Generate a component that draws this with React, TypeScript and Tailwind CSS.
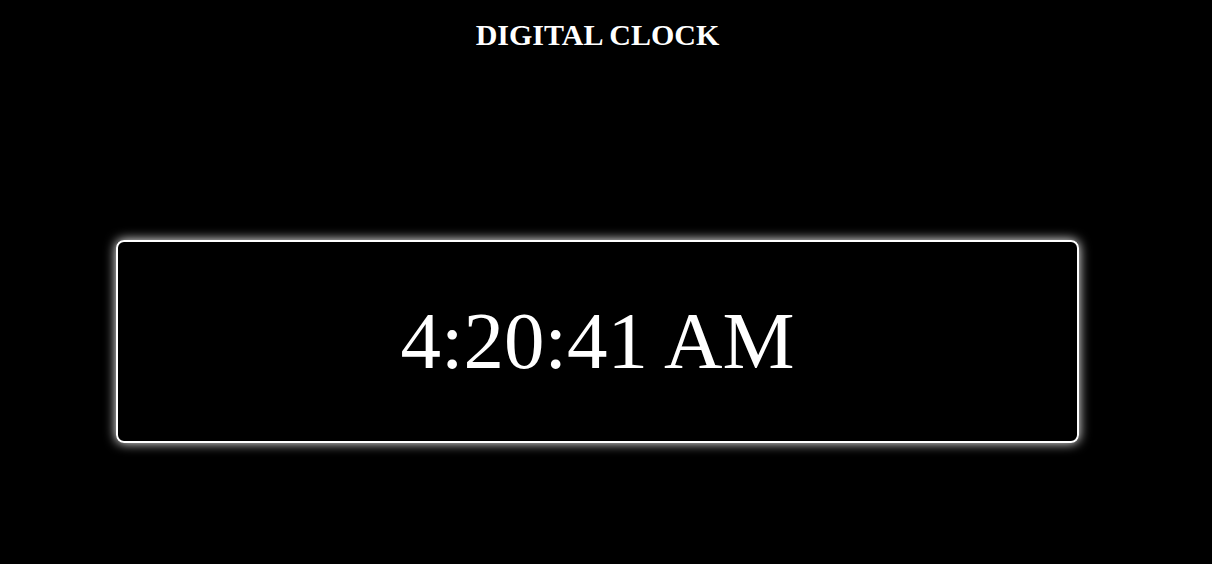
export default function App() {
  const time = '4:20:41 AM'

  return (
    <div className="min-h-screen w-full bg-black" style={{ fontFamily: '"Liberation Serif", "Times New Roman", serif' }}>
      <div className="w-[1195px] flex flex-col items-center pt-[12px]">
        {/* Title */}
        <h1 className="text-[30px] font-bold text-white leading-normal">DIGITAL CLOCK</h1>

        {/* Clock box */}
        <div className="mt-[183px] w-[963px] h-[203px] border-2 border-white rounded-lg shadow-[0_0_12px_#fff] flex items-center justify-center">
          <span className="text-[81px] text-white leading-normal">{time}</span>
        </div>
      </div>
    </div>
  )
}
